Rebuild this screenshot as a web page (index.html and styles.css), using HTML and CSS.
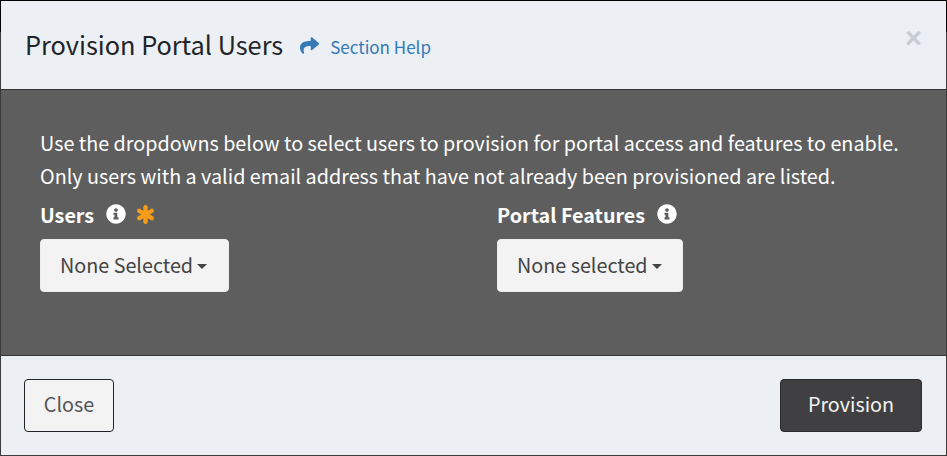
FILE: index.html
```html
<!DOCTYPE html>
<html lang="en">
<head>
<meta charset="utf-8">
<title>Provision Portal Users</title>
<link rel="stylesheet" href="styles.css">
</head>
<body>
<div class="modal">
  <header class="modal-header">
    <h1 class="modal-title">Provision Portal Users</h1>
    <a class="help-link" href="#">
      <svg class="help-icon" viewBox="0 0 512 512" aria-hidden="true"><path fill="currentColor" d="M503.700 189.800L327.700 37.900C312.300 24.600 288 35.400 288 56v80C127.400 137.800 0 170 0 322.300c0 61.500 39.600 122.400 83.400 154.200 13.700 9.900 33.200-2.500 28.100-18.600C66.100 312.800 132.900 274.300 288 272.100V360c0 20.700 24.300 31.400 39.700 18.200l176-152c11.100-9.600 11.100-26.800 0-36.400z"/></svg>
      <span>Section Help</span>
    </a>
    <button class="close-x" type="button" aria-label="Close">×</button>
  </header>
  <main class="modal-body">
    <p class="intro">Use the dropdowns below to select users to provision for portal access and features to enable. Only users with a valid email address that have not already been provisioned are listed.</p>
    <div class="fields">
      <div class="field">
        <div class="field-label">
          <span>Users</span>
          <svg class="info-icon" viewBox="0 0 512 512" aria-hidden="true"><path fill="currentColor" fill-rule="evenodd" d="M256 8C119 8 8 119 8 256s111 248 248 248 248-111 248-248S393 8 256 8zm0 98c26 0 47 21 47 47s-21 47-47 47-47-21-47-47 21-47 47-47zm66 276c0 7-5 12-12 12H202c-7 0-12-5-12-12v-30c0-7 5-12 12-12h14v-62h-14c-7 0-12-5-12-12v-30c0-7 5-12 12-12h76c7 0 12 5 12 12v104h20c7 0 12 5 12 12z"/></svg>
          <svg class="req-icon" viewBox="0 0 512 512" aria-hidden="true"><g stroke="currentColor" stroke-width="118" stroke-linecap="round"><line x1="256" y1="60" x2="256" y2="452"/><line x1="86" y1="158" x2="426" y2="354"/><line x1="86" y1="354" x2="426" y2="158"/></g></svg>
        </div>
        <button class="dropdown" type="button">None Selected<span class="caret"></span></button>
      </div>
      <div class="field">
        <div class="field-label">
          <span>Portal Features</span>
          <svg class="info-icon" viewBox="0 0 512 512" aria-hidden="true"><path fill="currentColor" fill-rule="evenodd" d="M256 8C119 8 8 119 8 256s111 248 248 248 248-111 248-248S393 8 256 8zm0 98c26 0 47 21 47 47s-21 47-47 47-47-21-47-47 21-47 47-47zm66 276c0 7-5 12-12 12H202c-7 0-12-5-12-12v-30c0-7 5-12 12-12h14v-62h-14c-7 0-12-5-12-12v-30c0-7 5-12 12-12h76c7 0 12 5 12 12v104h20c7 0 12 5 12 12z"/></svg>
        </div>
        <button class="dropdown" type="button">None selected<span class="caret"></span></button>
      </div>
    </div>
  </main>
  <footer class="modal-footer">
    <button class="btn btn-close" type="button">Close</button>
    <button class="btn btn-primary" type="button">Provision</button>
  </footer>
</div>
</body>
</html>
```
FILE: styles.css
```css
* { box-sizing: border-box; }
html, body { margin: 0; padding: 0; }
body {
  width: 947px;
  height: 456px;
  overflow: hidden;
  background: #5e5e5e;
  font-family: "Noto Sans CJK SC", "Noto Sans", sans-serif;
  color: #212529;
}
.modal {
  width: 947px;
  height: 456px;
  display: flex;
  flex-direction: column;
  border: 1px solid;
  border-image: linear-gradient(#000 32px, #3a3a3a 32px) 1;
  background: #5e5e5e;
}
.modal-header {
  height: 89px;
  display: flex;
  align-items: center;
  padding: 0 24px;
  background: #eceff4;
  border-bottom: 1px solid #333;
  flex: none;
}
.modal-title {
  margin: 0 0 3px;
  font-size: 25.3px;
  font-weight: 400;
  color: #212529;
}
.help-link {
  display: flex;
  align-items: center;
  margin-left: 17px;
  padding-top: 2px;
  color: #337ab7;
  font-size: 17px;
  text-decoration: none;
}
.help-icon { width: 19px; height: 19px; margin-right: 11px; margin-top: -1px; }
.close-x {
  margin-left: auto;
  padding: 0;
  border: 0;
  background: none;
  color: #c9ccd1;
  font-size: 29px;
  font-weight: 700;
  line-height: 1;
  margin-top: -13px;
}
.modal-body {
  flex: 1;
  padding: 36px 39px 0;
  color: #fff;
}
.intro {
  margin: 0;
  font-size: 19.75px;
  line-height: 33px;
  width: 870px;
}
.fields {
  display: flex;
  margin-top: 9px;
}
.field { flex: none; width: 457px; }
.field-label {
  display: flex;
  align-items: center;
  font-size: 19.75px;
  font-weight: 700;
  height: 26px;
  margin-bottom: 12px;
}
.info-icon { width: 20px; height: 20px; margin-left: 12px; }
.req-icon { width: 19px; height: 19px; margin-left: 10px; color: #f59c1a; }
.dropdown {
  display: inline-flex;
  align-items: center;
  height: 53px;
  padding: 0 20.5px 2px 19px;
  border: 1px solid #eee;
  border-radius: 4px;
  background: #f3f3f3;
  color: #444;
  font-family: inherit;
  font-size: 19.75px;
}
.caret {
  margin-left: 4px;
  margin-top: 4px;
  width: 0;
  height: 0;
  border-left: 5.500px solid transparent;
  border-right: 5.500px solid transparent;
  border-top: 5.500px solid #444;
}
.modal-footer {
  height: 100px;
  flex: none;
  display: flex;
  justify-content: space-between;
  align-items: flex-start;
  padding: 23px 24px 0 23px;
  background: #eceff4;
  border-top: 1px solid #333;
}
.btn {
  height: 53px;
  padding: 0 0 5px;
  border-radius: 4px;
  font-family: inherit;
  font-size: 19.75px;
}
.btn-close { width: 90px; border: 1px solid #212529; background: #f3f3f3; color: #555; }
.btn-primary { width: 142px; border: 1px solid #2b2b2e; background: #404042; color: #f2f2f2; }
```
